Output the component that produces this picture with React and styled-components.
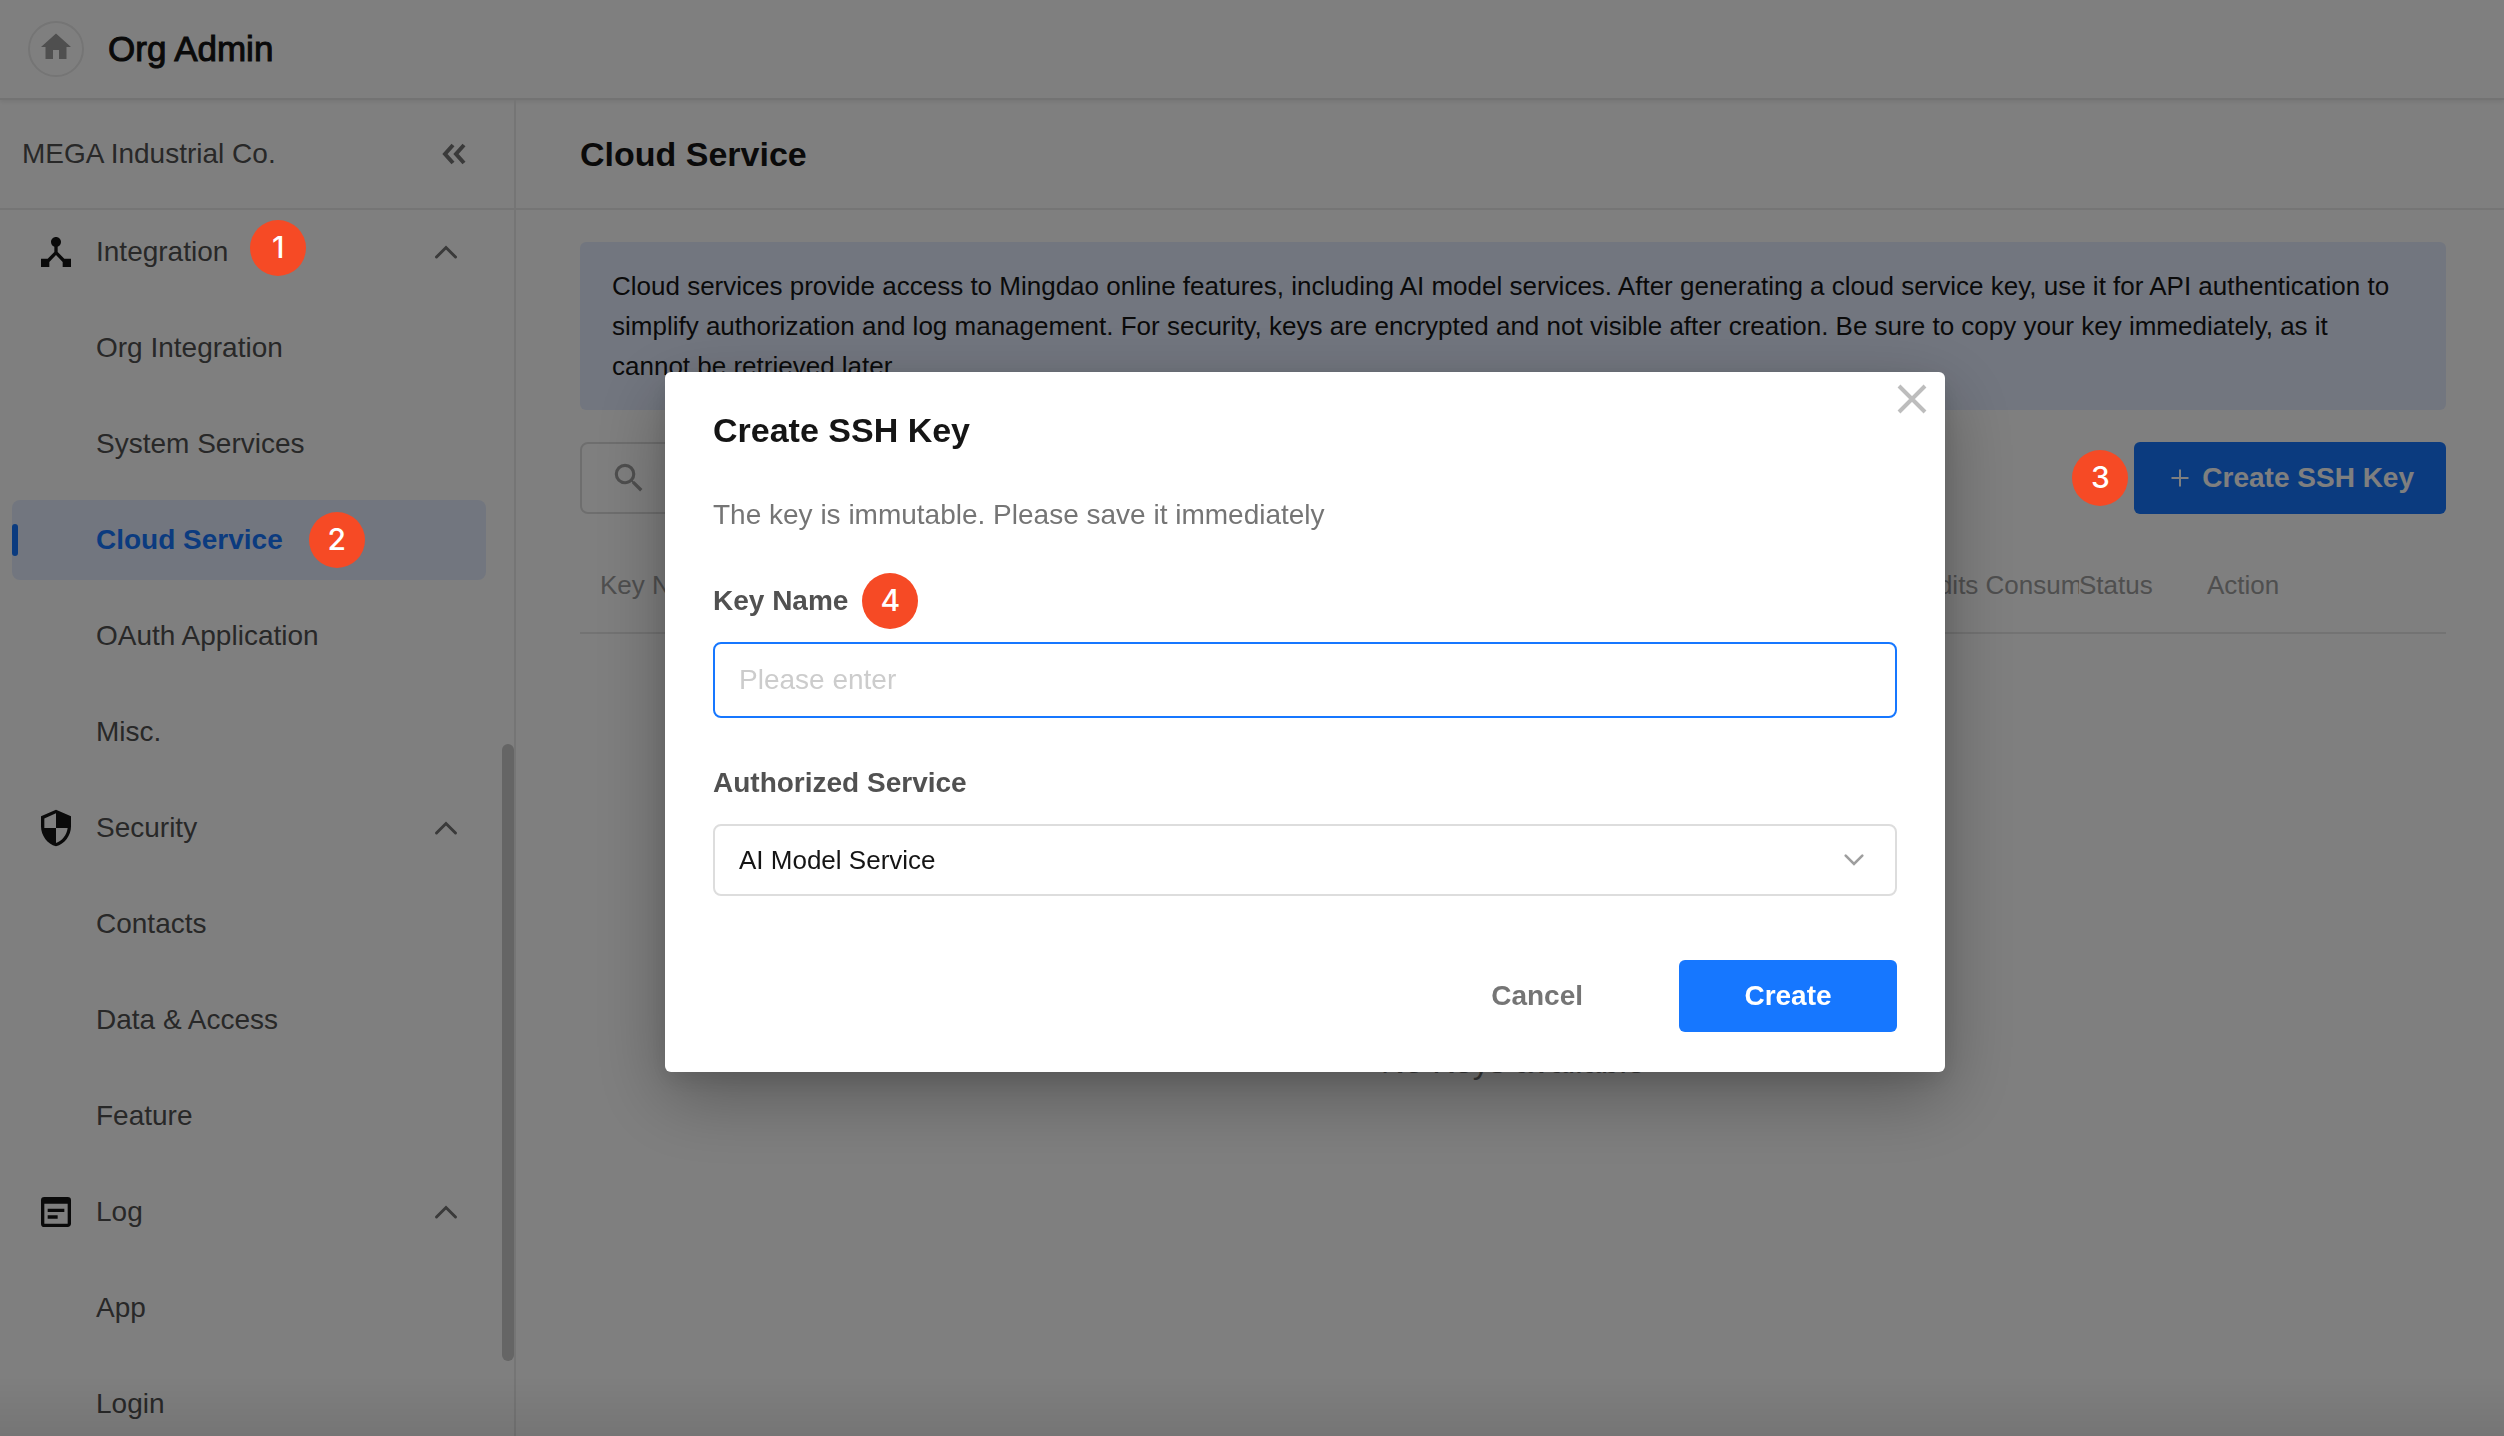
import React, { useState } from "react";
import styled, { createGlobalStyle } from "styled-components";
import { MdDeviceHub, MdHome, MdSearch, MdSecurity, MdWysiwyg } from "react-icons/md";

const GlobalStyle = createGlobalStyle`
    * {
        box-sizing: border-box;
    }
    body {
        margin: 0;
        overflow: hidden;
        background: #fff;
        color: #151515;
        font-family: "Liberation Sans", Arial, sans-serif;
        font-size: 28px;
    }
    button, input, select {
        font: inherit;
    }
    h1, h2, p, ul {
        margin: 0;
        padding: 0;
    }
`;

const Page = styled.div`
    display: flex;
    flex-direction: column;
    height: 100vh;
`;

const TopBar = styled.header`
    display: flex;
    align-items: center;
    flex-shrink: 0;
    gap: 24px;
    height: 100px;
    padding: 0 28px;
    border-bottom: 2px solid #e6e6e6;
    box-shadow: 0 2px 4px rgba(0, 0, 0, 0.08);
`;

const HomeLink = styled.a`
    display: flex;
    align-items: center;
    justify-content: center;
    width: 56px;
    height: 56px;
    padding-bottom: 4px;
    border: 2px solid #eaeaea;
    border-radius: 50%;
    color: #9e9e9e;
`;

const AppName = styled.h1`
    font-size: 35px;
    font-weight: 400;
    line-height: 44px;
    -webkit-text-stroke: 1px currentColor;
`;

const Body = styled.div`
    display: flex;
    flex: 1;
    min-height: 0;
`;

const Sidebar = styled.aside`
    position: relative;
    display: flex;
    flex-direction: column;
    flex-shrink: 0;
    width: 516px;
    border-right: 2px solid #eaeaea;
    color: #515151;
`;

const OrgRow = styled.div`
    display: flex;
    align-items: center;
    justify-content: space-between;
    flex-shrink: 0;
    height: 110px;
    padding: 0 48px 0 22px;
    border-bottom: 2px solid #eaeaea;
`;

const IconButton = styled.button`
    display: flex;
    padding: 0;
    border: 0;
    background: none;
    color: #757575;
    cursor: pointer;
`;

const Nav = styled.nav`
    flex: 1;
    min-height: 0;
    padding: 2px 28px 0 12px;
    overflow: hidden;
`;

const NavList = styled.ul`
    display: flex;
    flex-direction: column;
    gap: 16px;
    list-style: none;
`;

const GroupButton = styled.button`
    display: flex;
    align-items: center;
    width: 100%;
    height: 80px;
    padding: 0 28px 0 24px;
    border: 0;
    background: none;
    color: inherit;
    text-align: left;
    cursor: pointer;
`;

const GroupIcon = styled.span`
    display: flex;
    width: 60px;
    color: #151515;
`;

const GroupChevron = styled.span`
    display: flex;
    margin-left: auto;
    color: #757575;
`;

const NavLink = styled.a`
    display: flex;
    align-items: center;
    height: 80px;
    border-radius: 8px;
    background: ${props => (props.$active ? "#e5edff" : "transparent")};
    color: ${props => (props.$active ? "#1677ff" : "inherit")};
    font-weight: ${props => (props.$active ? 700 : 400)};
    text-decoration: none;
    &::before {
        content: "";
        width: 6px;
        height: 32px;
        margin-right: 78px;
        border-radius: 3px;
        background: ${props => (props.$active ? "#1677ff" : "transparent")};
    }
`;

const ScrollThumb = styled.div`
    position: absolute;
    right: 0;
    top: 644px;
    width: 12px;
    height: 617px;
    border-radius: 6px;
    background: #cbcbcb;
`;

const Anchor = styled.span`
    position: relative;
    display: inline-flex;
`;

/* step markers stay readable above the dimmed page */
const Badge = styled.span`
    position: absolute;
    top: 50%;
    ${props => (props.$side === "left" ? "right" : "left")}: calc(100% + ${props => props.$gap}px);
    z-index: 20;
    display: flex;
    align-items: center;
    justify-content: center;
    width: 56px;
    height: 56px;
    margin-top: ${props => (props.$raised ? -32 : -28)}px;
    padding-bottom: 2px;
    border-radius: 50%;
    background: #f64a25;
    color: #fff;
    font-family: Inter, sans-serif;
    font-size: 30px;
    font-weight: 500;
`;

const Main = styled.main`
    flex: 1;
    min-width: 0;
`;

const TitleRow = styled.div`
    display: flex;
    align-items: center;
    height: 110px;
    padding: 0 64px;
    border-bottom: 2px solid #eaeaea;
`;

const Title = styled.h2`
    font-size: 34px;
    font-weight: 700;
    line-height: 44px;
`;

const Content = styled.div`
    padding: 32px 58px 0 64px;
`;

const Notice = styled.p`
    padding: 24px 40px 24px 32px;
    border-radius: 6px;
    background: #e5edff;
    font-size: 26px;
    line-height: 40px;
`;

const Toolbar = styled.div`
    display: flex;
    justify-content: space-between;
    margin: 32px 0 24px;
`;

const SearchBox = styled.label`
    display: flex;
    align-items: center;
    width: 480px;
    height: 72px;
    padding: 0 28px;
    border: 2px solid #ddd;
    border-radius: 8px;
    color: #9e9e9e;
`;

const SearchInput = styled.input`
    flex: 1;
    min-width: 0;
    border: 0;
    outline: 0;
    background: none;
`;

const PrimaryButton = styled.button`
    display: flex;
    align-items: center;
    justify-content: center;
    gap: 8px;
    min-width: 218px;
    height: 72px;
    padding: 0 32px;
    border: 0;
    border-radius: 6px;
    background: #1677ff;
    color: #fff;
    font-weight: 700;
    cursor: pointer;
`;

const KeyTable = styled.table`
    width: 100%;
    table-layout: fixed;
    border-spacing: 0;
`;

const Th = styled.th`
    width: ${props => props.$width || "auto"};
    height: 96px;
    padding: 0 0 0 ${props => (props.$first ? 20 : 0)}px;
    border-bottom: 2px solid #e6e6e6;
    overflow: hidden;
    color: #9e9e9e;
    font-size: 26px;
    font-weight: 400;
    text-align: left;
    white-space: nowrap;
`;

const EmptyCell = styled.td`
    height: 856px;
    padding: 0;
    color: #757575;
    font-size: 33px;
    text-align: center;
`;

const Overlay = styled.div`
    position: fixed;
    inset: 0;
    z-index: 10;
    display: flex;
    align-items: center;
    justify-content: center;
    padding: 8px 0 0 106px;
    background: linear-gradient(to top, rgba(0, 0, 0, 0.08), transparent 60px), rgba(0, 0, 0, 0.5);
`;

const Dialog = styled.form`
    position: relative;
    display: flex;
    flex-direction: column;
    width: 1280px;
    padding: 36px 48px 40px;
    border-radius: 6px;
    background: #fff;
    box-shadow: 0 24px 72px rgba(0, 0, 0, 0.3), 0 8px 24px rgba(0, 0, 0, 0.1);
`;

const CloseButton = styled(IconButton)`
    position: absolute;
    top: 12px;
    right: 18px;
    color: #bdbdbd;
`;

const Hint = styled.p`
    margin: 44px 0 46px;
    color: #757575;
    line-height: 38px;
`;

const Field = styled.div`
    display: flex;
    flex-direction: column;
    gap: 20px;
    & + & {
        margin-top: 44px;
    }
`;

const Label = styled.label`
    align-self: flex-start;
    color: #515151;
    font-weight: 700;
    line-height: 42px;
`;

const TextInput = styled.input`
    height: 76px;
    padding: 0 24px;
    border: 2px solid #1677ff;
    border-radius: 8px;
    outline: 0;
    color: #151515;
    &::placeholder {
        color: #ccc;
    }
`;

const SelectWrap = styled.div`
    display: grid;
    align-items: center;
    color: #9e9e9e;
    > * {
        grid-area: 1 / 1;
    }
    > svg {
        justify-self: end;
        margin-right: 32px;
        pointer-events: none;
    }
`;

const Select = styled.select`
    appearance: none;
    width: 100%;
    height: 72px;
    padding: 0 24px;
    border: 2px solid #ddd;
    border-radius: 8px;
    background: #fff;
    color: #151515;
    font-size: 26px;
`;

const Actions = styled.div`
    display: flex;
    justify-content: flex-end;
    gap: 32px;
    margin-top: 64px;
`;

const CancelButton = styled.button`
    height: 72px;
    padding: 0 64px;
    border: 0;
    background: none;
    color: #757575;
    font-weight: 700;
    cursor: pointer;
`;

const Chevron = ({ up }) => (
    <svg width={up ? 24 : 22} height={up ? 16 : 14} viewBox="0 0 24 16" fill="none" stroke="currentColor" strokeWidth="3" strokeLinecap="round">
        <path d={up ? "M2.5 13 12 3.5 21.5 13" : "M2.5 3 12 12.5 21.5 3"} />
    </svg>
);

const Collapse = () => (
    <svg width="24" height="24" viewBox="0 0 24 24" fill="none" stroke="currentColor" strokeWidth="4">
        <path d="M11 3 3 12l8 9M22 3l-8 9 8 9" />
    </svg>
);

const Plus = () => (
    <svg width="28" height="28" viewBox="0 0 28 28" stroke="currentColor" strokeWidth="2">
        <path d="M14 5.5v17M5.5 14h17" />
    </svg>
);

const Cross = () => (
    <svg width="30" height="30" viewBox="0 0 30 30" stroke="currentColor" strokeWidth="4">
        <path d="M2 2l26 26M28 2 2 28" />
    </svg>
);

const groups = [
    {
        name: "Integration",
        Icon: MdDeviceHub,
        step: 1,
        items: [
            { name: "Org Integration" },
            { name: "System Services" },
            { name: "Cloud Service", active: true, step: 2 },
            { name: "OAuth Application" },
            { name: "Misc." }
        ]
    },
    {
        name: "Security",
        Icon: MdSecurity,
        items: [{ name: "Contacts" }, { name: "Data & Access" }, { name: "Feature" }]
    },
    {
        name: "Log",
        Icon: MdWysiwyg,
        items: [{ name: "App" }, { name: "Login" }]
    }
];

const SideMenu = () => (
    <Sidebar>
        <OrgRow>
            <span>MEGA Industrial Co.</span>
            <IconButton type="button" aria-label="Collapse menu">
                <Collapse />
            </IconButton>
        </OrgRow>
        <Nav>
            <NavList>
                {groups.map(({ name, Icon, step, items }) => (
                    <React.Fragment key={name}>
                        <li>
                            <GroupButton type="button" aria-expanded="true">
                                <GroupIcon>
                                    <Icon size={40} />
                                </GroupIcon>
                                <Anchor>
                                    {name}
                                    {step && <Badge $gap={22} $raised>{step}</Badge>}
                                </Anchor>
                                <GroupChevron>
                                    <Chevron up />
                                </GroupChevron>
                            </GroupButton>
                        </li>
                        {items.map(item => (
                            <li key={item.name}>
                                <NavLink href="#" $active={item.active}>
                                    <Anchor>
                                        {item.name}
                                        {item.step && <Badge $gap={26}>{item.step}</Badge>}
                                    </Anchor>
                                </NavLink>
                            </li>
                        ))}
                    </React.Fragment>
                ))}
            </NavList>
        </Nav>
        <ScrollThumb />
    </Sidebar>
);

const CreateKeyDialog = () => {
    const [keyName, setKeyName] = useState("");
    return (
        <Overlay>
            <Dialog role="dialog" aria-labelledby="dialog-title" onSubmit={e => e.preventDefault()}>
                <Title id="dialog-title">Create SSH Key</Title>
                <CloseButton type="button" aria-label="Close">
                    <Cross />
                </CloseButton>
                <Hint>The key is immutable. Please save it immediately</Hint>
                <Field>
                    <Label htmlFor="key-name">
                        <Anchor>
                            Key Name
                            <Badge $gap={14}>4</Badge>
                        </Anchor>
                    </Label>
                    <TextInput
                        id="key-name"
                        placeholder="Please enter"
                        value={keyName}
                        onChange={e => setKeyName(e.target.value)}
                    />
                </Field>
                <Field>
                    <Label htmlFor="service">Authorized Service</Label>
                    <SelectWrap>
                        <Select id="service">
                            <option>AI Model Service</option>
                        </Select>
                        <Chevron />
                    </SelectWrap>
                </Field>
                <Actions>
                    <CancelButton type="button">Cancel</CancelButton>
                    <PrimaryButton type="submit">Create</PrimaryButton>
                </Actions>
            </Dialog>
        </Overlay>
    );
};

export default () => (
    <>
        <GlobalStyle />
        <Page>
            <TopBar>
                <HomeLink href="#" aria-label="Home">
                    <MdHome size={36} />
                </HomeLink>
                <AppName>Org Admin</AppName>
            </TopBar>
            <Body>
                <SideMenu />
                <Main>
                    <TitleRow>
                        <Title>Cloud Service</Title>
                    </TitleRow>
                    <Content>
                        <Notice>
                            Cloud services provide access to Mingdao online features, including AI model services. After
                            generating a cloud service key, use it for API authentication to simplify authorization and
                            log management. For security, keys are encrypted and not visible after creation. Be sure to
                            copy your key immediately, as it cannot be retrieved later.
                        </Notice>
                        <Toolbar>
                            <SearchBox>
                                <MdSearch size={38} />
                                <SearchInput type="search" aria-label="Search" />
                            </SearchBox>
                            <Anchor>
                                <Badge $side="left" $gap={6}>3</Badge>
                                <PrimaryButton type="button">
                                    <Plus />
                                    Create SSH Key
                                </PrimaryButton>
                            </Anchor>
                        </Toolbar>
                        <KeyTable>
                            <thead>
                                <tr>
                                    <Th $first>Key Name</Th>
                                    <Th $width="183px">Credits Consumption</Th>
                                    <Th $width="128px">Status</Th>
                                    <Th $width="239px">Action</Th>
                                </tr>
                            </thead>
                            <tbody>
                                <tr>
                                    <EmptyCell colSpan={4}>No Keys available</EmptyCell>
                                </tr>
                            </tbody>
                        </KeyTable>
                    </Content>
                </Main>
            </Body>
        </Page>
        <CreateKeyDialog />
    </>
);
